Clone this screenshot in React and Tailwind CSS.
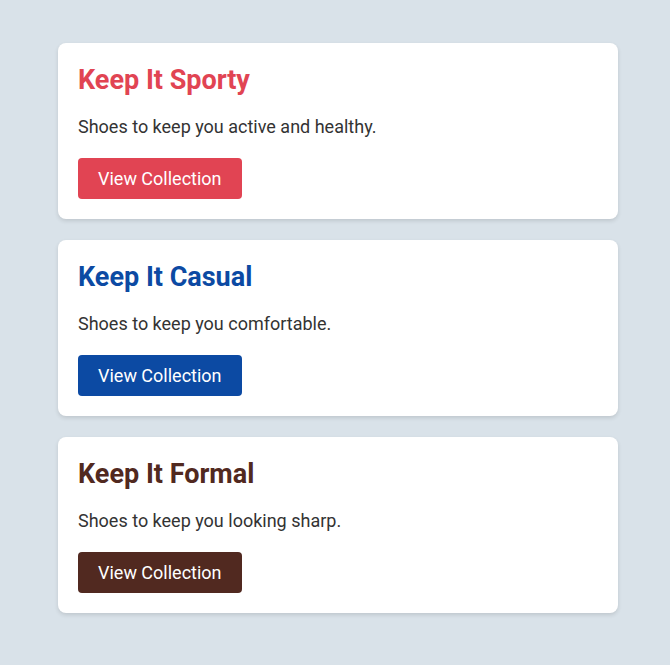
const cards = [
  {
    title: "Keep It Sporty",
    text: "Shoes to keep you active and healthy.",
    titleClass: "text-[#e14453]",
    btnClass: "bg-[#e14453]",
  },
  {
    title: "Keep It Casual",
    text: "Shoes to keep you comfortable.",
    titleClass: "text-[#0c4aa3]",
    btnClass: "bg-[#0c4aa3]",
  },
  {
    title: "Keep It Formal",
    text: "Shoes to keep you looking sharp.",
    titleClass: "text-[#512920]",
    btnClass: "bg-[#512920]",
  },
];

const App = () => {
  return (
    <div
      className="min-h-[665px] bg-[#d9e2e9] pt-[43px] pb-[52px]"
      style={{ fontFamily: "Roboto, sans-serif" }}
    >
      <div className="ml-[58px] w-[560px] flex flex-col gap-[21px]">
        {cards.map((card) => (
          <div
            key={card.title}
            className="bg-white rounded-lg p-5 h-[176px] shadow-[0_2px_4px_rgba(0,0,0,0.12)]"
          >
            <h2
              className={`text-[27px] font-bold leading-[34px] ${card.titleClass}`}
            >
              {card.title}
            </h2>
            <p className="mt-[16px] text-[18px] leading-[28px] text-[#333]">
              {card.text}
            </p>
            <button
              className={`mt-[17px] h-[41px] px-5 rounded text-white text-[18px] ${card.btnClass}`}
            >
              View Collection
            </button>
          </div>
        ))}
      </div>
    </div>
  );
};

export default App;
